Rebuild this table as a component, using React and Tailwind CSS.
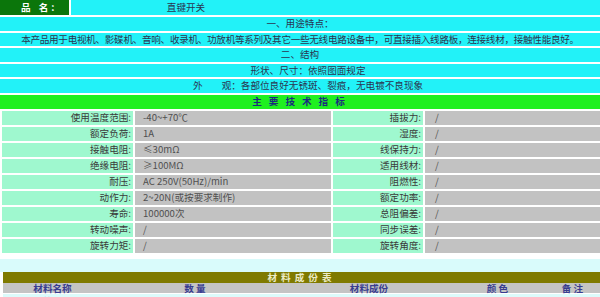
import React from "react";

const specs = [
    ["使用温度范围", "-40~+70℃", "插拔力", "/"],
    ["额定负荷", "1A", "湿度", "/"],
    ["接触电阻", "≤30mΩ", "线保持力", "/"],
    ["绝缘电阻", "≥100MΩ", "适用线材", "/"],
    ["耐压", "AC 250V(50Hz)/min", "阻燃性", "/"],
    ["动作力", "2~20N(或按要求制作)", "额定功率", "/"],
    ["寿命", "100000次", "总阻偏差", "/"],
    ["转动噪声", "/", "同步误差", "/"],
    ["旋转力矩", "/", "旋转角度", "/"],
];

const materialCols = ["材料名称", "数 量", "材料成份", "颜 色", "备 注"];
const materialRow = ["簧片", "1", "磷铜镀银", "原色", ""];

export default function App() {
    return (
        <div className="w-[600px] h-[297px] overflow-hidden bg-white text-[9.6px] leading-[13px] text-[#2a3550] font-['Noto_Sans_CJK_SC','Noto_Sans',sans-serif]">
            {/* 产品说明 */}
            <div className="flex flex-col gap-[2px]">
                <div className="grid grid-cols-[69px_1fr] gap-[2px] h-[15px]">
                    <div className="bg-[#0b760b] text-white font-bold flex items-center pl-[21px] tracking-[3px]">
                        品 名:
                    </div>
                    <div className="bg-[#22f2f8] flex items-center">
                        <div className="w-[230px] text-center">直键开关</div>
                    </div>
                </div>
                <div className="bg-[#22f2f8] h-[13.5px] flex items-center justify-center">
                    一、用途特点：
                </div>
                <div className="bg-[#22f2f8] h-[13.5px] flex items-center justify-center tracking-[-0.3px]">
                    本产品用于电视机、影碟机、音响、收录机、功放机等系列及其它一些无线电路设备中，可直接插入线路板，连接线材，接触性能良好。
                </div>
                <div className="bg-[#22f2f8] h-[13.5px] flex items-center justify-center">
                    二、结构
                </div>
                <div className="bg-[#22f2f8] h-[13.5px] flex items-center justify-center pl-[16px]">
                    形状、尺寸：依照图面规定
                </div>
                <div className="bg-[#22f2f8] h-[13.5px] flex items-center justify-center pl-[16px]">
                    外　　观：各部位良好无锈斑、裂痕，无电镀不良现象
                </div>
                <div className="bg-[#1ff01f] h-[14px] flex items-center justify-center font-bold text-[#1a2a80] tracking-[7px] pl-[4px]">
                    主要技术指标
                </div>
            </div>

            {/* 技术指标 */}
            <div className="grid grid-cols-[131px_196px_90px_1fr] gap-[2px] pl-[2px] mt-[2px] text-[#3a3a3a]">
                {specs.map((row, index) => (
                    <React.Fragment key={index}>
                        <div className="bg-[#9ff8cf] h-[14px] flex items-center justify-end pr-[2px]">
                            {row[0]}:
                        </div>
                        <div className="bg-[#c2c2c2] h-[14px] flex items-center pl-[8px] text-[#505050]">
                            {row[1]}
                        </div>
                        <div className="bg-[#9ff8cf] h-[14px] flex items-center justify-end pr-[2px]">
                            {row[2]}:
                        </div>
                        <div className="bg-[#c2c2c2] h-[14px] flex items-center pl-[10px] text-[#505050]">
                            {row[3]}
                        </div>
                    </React.Fragment>
                ))}
            </div>

            {/* 材料成份表 */}
            <div className="mt-[6px] h-[13px] bg-[#d9fbfb]"></div>
            <div className="pl-[3px]">
                <div className="bg-[#7f7a00] h-[11px] leading-[11px] flex items-center justify-center text-[#ececc8] font-bold tracking-[4px]">
                    材料成份表
                </div>
                <div className="grid grid-cols-[99px_186px_162px_95px_1fr] bg-[#c4c4c4] h-[10px] leading-[10px] items-center text-[#383c90] font-semibold">
                    {materialCols.map((col, index) => (
                        <div key={index} className="text-center">
                            {col}
                        </div>
                    ))}
                </div>
                <div className="grid grid-cols-[99px_186px_162px_95px_1fr] bg-[#dcfbfb] h-[14px] items-start leading-[12px] text-[#383c90] mt-[1px] pt-[1px]">
                    {materialRow.map((col, index) => (
                        <div key={index} className="text-center">
                            {col}
                        </div>
                    ))}
                </div>
            </div>
        </div>
    );
}
